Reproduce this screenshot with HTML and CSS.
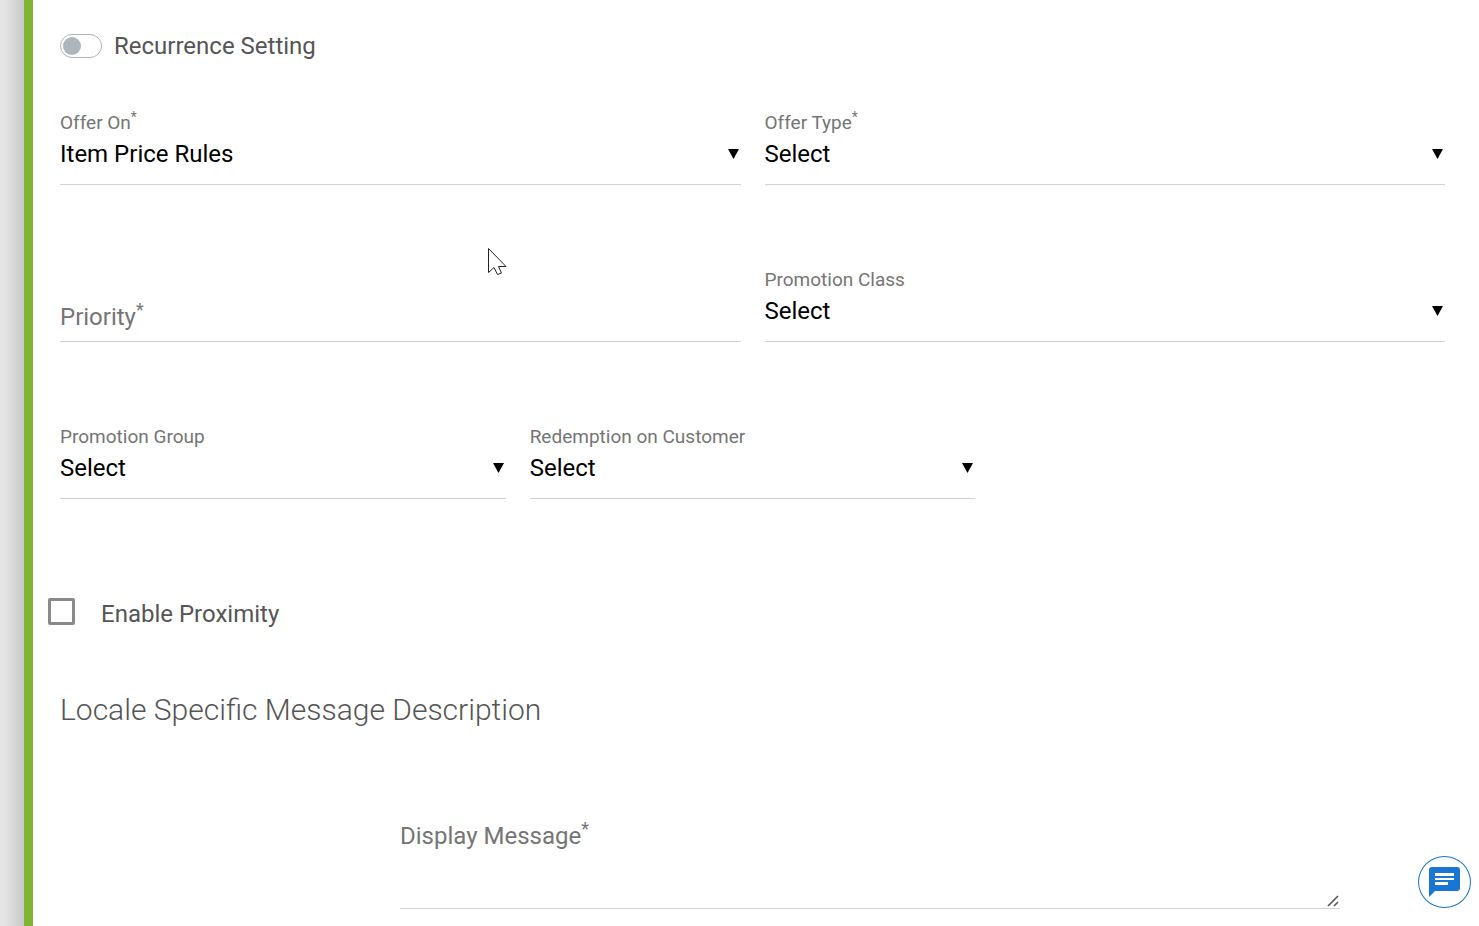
FILE: index.html
```html
<!DOCTYPE html>
<html lang="en">
<head>
<meta charset="utf-8">
<title>Offer Settings</title>
<link rel="stylesheet" href="styles.css">
</head>
<body>
<div class="page">
  <div class="gutter"></div>
  <main class="panel">
    <form class="form">
      <label class="toggle-row"><input class="toggle" type="checkbox">Recurrence Setting</label>

      <div class="fields halves">
        <div class="field">
          <label class="label" for="offer-on">Offer On<sup>*</sup></label>
          <div class="select-wrap">
            <select class="select" id="offer-on"><option>Item Price Rules</option></select>
            <svg class="arrow" viewBox="0 0 11 10"><path d="M0 0H11L5.5 10Z"/></svg>
          </div>
        </div>
        <div class="field">
          <label class="label" for="offer-type">Offer Type<sup>*</sup></label>
          <div class="select-wrap">
            <select class="select" id="offer-type"><option>Select</option></select>
            <svg class="arrow" viewBox="0 0 11 10"><path d="M0 0H11L5.5 10Z"/></svg>
          </div>
        </div>
        <div class="field stacked">
          <label class="inner-label" for="priority">Priority<sup>*</sup></label>
          <input class="text-input" id="priority" type="text">
        </div>
        <div class="field">
          <label class="label" for="promo-class">Promotion Class</label>
          <div class="select-wrap">
            <select class="select" id="promo-class"><option>Select</option></select>
            <svg class="arrow" viewBox="0 0 11 10"><path d="M0 0H11L5.5 10Z"/></svg>
          </div>
        </div>
      </div>

      <div class="fields thirds">
        <div class="field">
          <label class="label" for="promo-group">Promotion Group</label>
          <div class="select-wrap">
            <select class="select" id="promo-group"><option>Select</option></select>
            <svg class="arrow" viewBox="0 0 11 10"><path d="M0 0H11L5.5 10Z"/></svg>
          </div>
        </div>
        <div class="field">
          <label class="label" for="redemption">Redemption on Customer</label>
          <div class="select-wrap">
            <select class="select" id="redemption"><option>Select</option></select>
            <svg class="arrow" viewBox="0 0 11 10"><path d="M0 0H11L5.5 10Z"/></svg>
          </div>
        </div>
      </div>

      <label class="check-row"><input class="check" type="checkbox">Enable Proximity</label>

      <h2 class="heading">Locale Specific Message Description</h2>

      <div class="message">
        <label class="message-label" for="message">Display Message<sup>*</sup></label>
        <textarea class="textarea" id="message"></textarea>
        <svg class="grip" viewBox="0 0 12 12"><path d="M1 11L11 1M7 11L11 7"/></svg>
      </div>
    </form>
  </main>
</div>

<button class="chat" type="button" aria-label="Chat">
  <svg class="chat-icon" viewBox="0 0 31 30">
    <path fill="#1976d2" d="M3 0H28Q31 0 31 3V21Q31 24 28 24H6L0 30V3Q0 0 3 0Z"/>
    <path fill="#fff" d="M6 6H25V9H6ZM6 11H25V13H6ZM6 15H19V18H6Z"/>
  </svg>
</button>

<svg class="pointer" viewBox="0 0 19 28"><path d="M.5 .5V24.5L6 19.5L9.5 26.5L13.5 25L10.5 18.5H18Z"/></svg>
</body>
</html>
```

FILE: styles.css
```css
* { box-sizing: border-box; }

body {
  margin: 0;
  background: #fff;
  color: #555;
  font-family: Roboto, "Open Sans", sans-serif;
  font-size: 24px;
  line-height: 32px;
}

sup {
  font-size: 75%;
  line-height: 0;
}

.page {
  display: flex;
  min-height: 100vh;
}

.gutter {
  flex: none;
  width: 24px;
  background: linear-gradient(to right, #e6e6e6, #e3e3e3 25%, #c8c8c8);
}

.panel {
  flex: 1;
  border-left: 9px solid #80b432;
  padding: 30px 34px 16px 27px;
}

.toggle-row {
  display: flex;
  align-items: center;
  gap: 12px;
}

.toggle {
  appearance: none;
  display: flex;
  align-items: center;
  width: 42px;
  height: 24px;
  margin: 0;
  padding: 0 2px;
  border: 1px solid #adb5bd;
  border-radius: 12px;
  background: #fff;
}

.toggle::before {
  content: "";
  width: 18px;
  height: 18px;
  border-radius: 50%;
  background: #adb5bd;
}

.fields {
  display: grid;
  gap: 82px 24px;
}

.halves {
  grid-template-columns: 1fr 1fr;
  margin-top: 48px;
}

.thirds {
  grid-template-columns: 1fr 1fr 1fr;
  margin-top: 82px;
}

.field {
  height: 75px;
  border-bottom: 1px solid #ced4da;
}

.label {
  display: block;
  color: #757575;
  font-size: 19px;
  line-height: 26px;
}

.label sup { font-size: 14px; }

.select-wrap,
.stacked,
.message { display: grid; }

.select-wrap { align-items: center; }

.select-wrap > *,
.stacked > *,
.message > * { grid-area: 1 / 1; }

.select,
.text-input,
.textarea {
  appearance: none;
  width: 100%;
  margin: 0;
  padding: 0;
  border: 0;
  border-radius: 0;
  outline: 0;
  background: transparent;
  color: #000;
  font: inherit;
}

.select { height: 36px; }

.arrow {
  justify-self: end;
  width: 11px;
  height: 10px;
  margin-right: 2px;
  pointer-events: none;
}

.inner-label {
  align-self: end;
  padding-bottom: 8px;
  color: #757575;
}

.check-row {
  display: flex;
  align-items: flex-start;
  gap: 26px;
  margin: 99px 0 0 -12px;
}

.check {
  appearance: none;
  width: 27px;
  height: 27px;
  margin: 0;
  border: 3px solid #8a8a8a;
  border-radius: 2px;
  background: #fff;
}

.heading {
  margin: 60px 0 0;
  font-size: 30px;
  font-weight: 300;
  line-height: 40px;
}

.message {
  margin: 90px 105px 0 340px;
  border-bottom: 1px solid #ced4da;
}

.message-label {
  align-self: start;
  color: #757575;
}

.textarea {
  height: 88px;
  resize: none;
}

.grip {
  align-self: end;
  justify-self: end;
  width: 12px;
  height: 12px;
  margin: 0 1px 1px 0;
  fill: none;
  stroke: #555;
  stroke-width: 1.6;
}

.chat {
  position: fixed;
  right: 8px;
  bottom: 18px;
  display: grid;
  place-items: center;
  width: 53px;
  height: 52px;
  padding: 0;
  border: 1px solid #1976d2;
  border-radius: 50%;
  background: #fff;
}

.chat-icon {
  width: 31px;
  height: 30px;
}

.pointer {
  position: absolute;
  top: 248px;
  left: 488px;
  width: 19px;
  height: 28px;
  fill: #fff;
  stroke: #223;
  pointer-events: none;
}
```
